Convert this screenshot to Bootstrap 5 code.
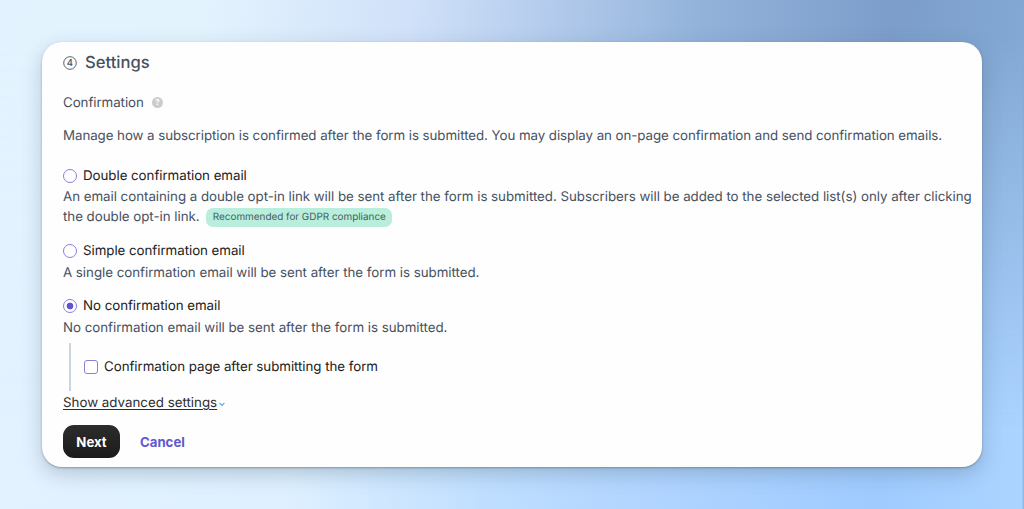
<!DOCTYPE html>
<html lang="en">
<head>
<meta charset="utf-8">
<meta name="viewport" content="width=device-width, initial-scale=1">
<title>Form settings</title>
<link href="https://cdn.jsdelivr.net/npm/bootstrap@5.3.0/dist/css/bootstrap.min.css" rel="stylesheet">
<style>
body{font-family:Inter,"Liberation Sans",sans-serif;font-size:13.33px;line-height:20px;color:#46515f;height:509px;overflow:hidden;text-rendering:geometricPrecision;
background:linear-gradient(90deg,#e3f2ff 0,#def0ff 290px,#c0dfff 480px,#b3d6ff 620px,#9fcbff 880px,#acd4ff 1022px,#94b9e2 1023px)}
body::before{content:"";position:absolute;inset:0;z-index:-1;
background:linear-gradient(97deg,#e2f3ff 0,#e3f3fe 200px,#d0e1f9 410px,#b7ceee 530px,#92b2da 700px,#7c9dca 890px,#84aad5 1040px);
-webkit-mask-image:linear-gradient(#000 0,#000 40px,transparent 430px);mask-image:linear-gradient(#000 0,#000 40px,transparent 430px)}
.panel{margin:42px 42px 0;height:425px;border-radius:20px;border:0;background:#fefefe;padding:9px 8px 0 21px;box-shadow:0 1px 2px rgba(80,95,105,.5),0 7px 20px rgba(80,105,120,.32)}
h1{font-size:16.6px;line-height:24px;font-weight:450;color:#46515f}
.intro{letter-spacing:-.07px}
.desc{letter-spacing:-.037px}
.text-ink{color:#222}
.opt{height:20px;gap:6px;letter-spacing:-.05px}
.form-check-input.tick{width:14px;height:14px;margin:-1px 0 0;border:1px solid #8a7ed8;background-color:#fff;box-shadow:none}
.tick[type=checkbox]{border-radius:3px}
.tick[type=radio]:checked{background-image:radial-gradient(circle,#6155cd 3px,transparent 3.7px)}
.tag{font-size:9.95px;line-height:19px;height:19px;padding:0 6.5px;border-radius:7px;background:#b8eedb;color:#465d60;vertical-align:top;margin:1px 0 0 3px;letter-spacing:-.02px}
.nest{margin:5px 0 0 6px;height:48px;border-left:2px solid #cbd5dd;padding-left:13px}
.adv{color:#2d2d2f;text-decoration:underline;text-underline-offset:2px;text-decoration-thickness:1px}
.btn-next{width:57px;height:33px;border-radius:11px;background:linear-gradient(#2c2c2c,#1b1b1b)}
.btn.act{font-size:13.2px;font-weight:650;line-height:20px;padding:0;border:0}
.btn.btn-next{color:#fff}
.btn.btn-cancel{color:#6257d2}
</style>
<script src="https://cdn.jsdelivr.net/npm/bootstrap@5.3.0/dist/js/bootstrap.bundle.min.js"></script>
</head>
<body>
<main class="card panel">
  <h1 class="d-flex align-items-center mb-0">
    <svg width="14" height="14" viewBox="0 0 14 14" class="me-2"><circle cx="7" cy="7" r="6.3" fill="none" stroke="#46515f" stroke-width=".9"/><text x="6.9" y="10.4" text-anchor="middle" font-size="9.5" font-weight="500" fill="#46515f">4</text></svg>
    Settings
  </h1>
  <div class="d-flex align-items-center" style="margin-top:18px"><span class="intro">Confirmation</span>
    <svg width="11" height="11" viewBox="0 0 11 11" style="margin:-2px 0 0 8px"><circle cx="5.5" cy="5.5" r="5.5" fill="#ccc"/><text x="5.5" y="8.4" text-anchor="middle" font-size="8" font-weight="600" fill="#fff">?</text></svg>
  </div>
  <p class="intro mb-0 text-nowrap" style="margin-top:13px">Manage how a subscription is confirmed after the form is submitted. You may display an on-page confirmation and send confirmation emails.</p>

  <label class="opt d-flex align-items-center text-ink" style="margin-top:20px"><input class="form-check-input tick" type="radio" name="mode">Double confirmation email</label>
  <div class="desc text-nowrap" style="margin-top:1px">An email containing a double opt-in link will be sent after the form is submitted. Subscribers will be added to the selected list(s) only after clicking<br>the double opt-in link. <span class="tag d-inline-block">Recommended for GDPR compliance</span></div>

  <label class="opt d-flex align-items-center text-ink" style="margin-top:14px"><input class="form-check-input tick" type="radio" name="mode">Simple confirmation email</label>
  <div class="desc" style="margin-top:2px">A single confirmation email will be sent after the form is submitted.</div>

  <label class="opt d-flex align-items-center text-ink" style="margin-top:13px"><input class="form-check-input tick" type="radio" name="mode" checked>No confirmation email</label>
  <div class="desc" style="margin-top:2px">No confirmation email will be sent after the form is submitted.</div>

  <div class="nest d-flex align-items-center">
    <label class="opt d-flex align-items-center text-ink"><input class="form-check-input tick" type="checkbox">Confirmation page after submitting the form</label>
  </div>
  <div class="d-flex align-items-center" style="margin-top:2px"><a href="#" class="adv">Show advanced settings</a>
    <svg width="6" height="5" viewBox="0 0 6 5" style="margin:3px 0 0 2px"><path d="M.6 1 3 3.4 5.4 1" fill="none" stroke="#62a8ee" stroke-width="1.1"/></svg>
  </div>
  <div class="d-flex align-items-center" style="margin-top:12px;gap:20px">
    <button class="btn act btn-next" type="button">Next</button>
    <button class="btn act btn-cancel" type="button">Cancel</button>
  </div>
</main>
</body>
</html>
